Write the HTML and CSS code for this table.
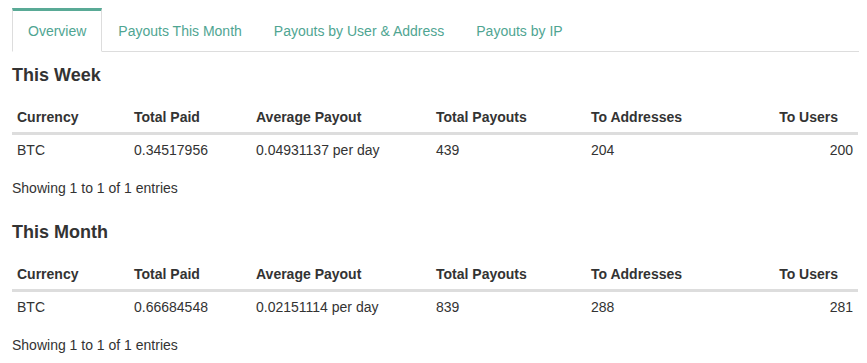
FILE: index.html
```html
<!DOCTYPE html>
<html lang="en">
<head>
<meta charset="utf-8">
<title>Payouts</title>
<link rel="stylesheet" href="styles.css">
</head>
<body>
<div class="page">
  <ul class="tabs">
    <li class="tab active"><a href="#">Overview</a></li>
    <li class="tab"><a href="#">Payouts This Month</a></li>
    <li class="tab"><a href="#">Payouts by User &amp; Address</a></li>
    <li class="tab"><a href="#">Payouts by IP</a></li>
  </ul>

  <section class="section">
    <h4 class="title">This Week</h4>
    <table class="grid">
      <colgroup>
        <col class="c1"><col class="c2"><col class="c3"><col class="c4"><col class="c5"><col class="c6">
      </colgroup>
      <thead>
        <tr>
          <th>Currency</th><th>Total Paid</th><th>Average Payout</th><th>Total Payouts</th><th>To Addresses</th><th class="num">To Users</th>
        </tr>
      </thead>
      <tbody>
        <tr>
          <td>BTC</td><td>0.34517956</td><td>0.04931137 per day</td><td>439</td><td>204</td><td class="num">200</td>
        </tr>
      </tbody>
    </table>
    <div class="info">Showing 1 to 1 of 1 entries</div>
  </section>

  <section class="section">
    <h4 class="title">This Month</h4>
    <table class="grid">
      <colgroup>
        <col class="c1"><col class="c2"><col class="c3"><col class="c4"><col class="c5"><col class="c6">
      </colgroup>
      <thead>
        <tr>
          <th>Currency</th><th>Total Paid</th><th>Average Payout</th><th>Total Payouts</th><th>To Addresses</th><th class="num">To Users</th>
        </tr>
      </thead>
      <tbody>
        <tr>
          <td>BTC</td><td>0.66684548</td><td>0.02151114 per day</td><td>839</td><td>288</td><td class="num">281</td>
        </tr>
      </tbody>
    </table>
    <div class="info">Showing 1 to 1 of 1 entries</div>
  </section>
</div>
</body>
</html>
```

FILE: styles.css
```css
* { box-sizing: border-box; }

html, body {
  margin: 0;
  padding: 0;
  background: #fff;
}

body {
  font-family: "Liberation Sans", Arial, sans-serif;
  font-size: 14px;
  line-height: 20px;
  color: #333;
}

.page {
  padding: 8px 8px 0 12px;
}

.tabs {
  list-style: none;
  margin: 0;
  padding: 0;
  display: flex;
  border-bottom: 1px solid #ddd;
  height: 44px;
}

.tab {
  margin-bottom: -1px;
}

.tab a {
  display: block;
  padding: 10px 15px;
  border: 1px solid transparent;
  border-top-width: 3px;
  color: #4fa592;
  text-decoration: none;
  line-height: 20px;
}

.tab.active a {
  border-color: #ddd;
  border-top-color: #59aa96;
  border-bottom-color: #fff;
  background: #fff;
}

.section + .section {
  padding-top: 11px;
}

.title {
  margin: 13px 0 0;
  font-size: 18px;
  line-height: 20px;
  font-weight: bold;
  color: #333;
}

.grid {
  width: 846px;
  margin-top: 17px;
  border-collapse: collapse;
  table-layout: fixed;
}

.c1 { width: 117px; }
.c2 { width: 122px; }
.c3 { width: 180px; }
.c4 { width: 155px; }
.c5 { width: 155px; }
.c6 { width: 117px; }

.grid th {
  text-align: left;
  font-weight: bold;
  padding: 5px 5px;
  border-bottom: 3px solid #ddd;
  white-space: nowrap;
}

.grid td {
  padding: 5px 5px;
  white-space: nowrap;
}

.grid th.num {
  text-align: right;
  padding-right: 20px;
}

.grid td.num {
  text-align: right;
}

.info {
  margin-top: 13px;
}
```
